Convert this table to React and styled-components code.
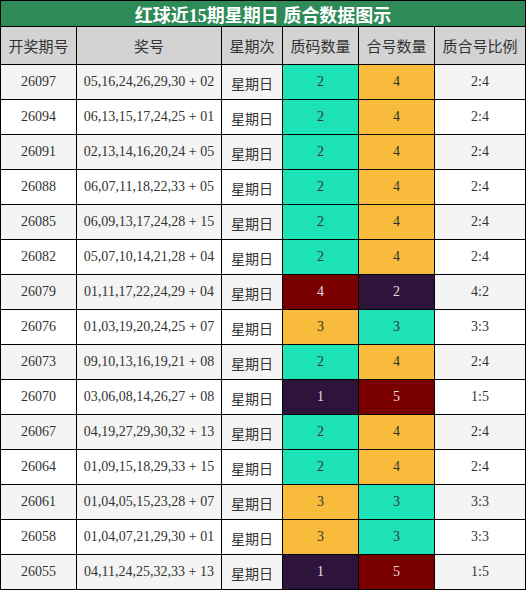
import React from 'react'
import styled, { createGlobalStyle } from 'styled-components'

const Global = createGlobalStyle`
  body {
    margin: 0;
    background: #fff;
    font-family: 'Liberation Serif', 'Noto Sans CJK SC', serif;
  }
`

const palette = {
  teal: { bg: '#1de2b5', fg: '#333' },
  orange: { bg: '#f9bb3b', fg: '#333' },
  red: { bg: '#7a0000', fg: '#ecdbe6' },
  purple: { bg: '#2e143a', fg: '#e6d9ea' },
}

const Board = styled.div`
  display: grid;
  grid-template-columns: 75px 144px 60px 75px 75px 90px;
  grid-template-rows: 25px 37px repeat(15, 34px);
  gap: 1px;
  padding: 1px;
  width: 526px;
  box-sizing: border-box;
  background: #000;
`

const Title = styled.div`
  grid-column: 1 / -1;
  display: flex;
  align-items: center;
  justify-content: center;
  background: #2e8b57;
  color: #fff;
  font-size: 18px;
  font-weight: bold;
`

const Head = styled.div`
  display: flex;
  align-items: center;
  justify-content: center;
  background: #d3d3d3;
  color: #333;
  font-size: 15px;
`

const Cell = styled.div`
  display: flex;
  align-items: center;
  justify-content: center;
  background: ${(p) => (p.$tone ? palette[p.$tone].bg : p.$odd ? '#f4f4f4' : '#fff')};
  color: ${(p) => (p.$tone ? palette[p.$tone].fg : '#333')};
  font-size: 14px;
  padding-top: ${(p) => (p.$cjk ? '2px' : '0')};
  white-space: nowrap;
`

// colour of a count cell depends on how many of six balls it holds
const primeTone = { 1: 'purple', 2: 'teal', 3: 'orange', 4: 'red' }
const compositeTone = { 2: 'purple', 3: 'teal', 4: 'orange', 5: 'red' }

const rows = [
  ['26097', '05,16,24,26,29,30 + 02', 2, 4],
  ['26094', '06,13,15,17,24,25 + 01', 2, 4],
  ['26091', '02,13,14,16,20,24 + 05', 2, 4],
  ['26088', '06,07,11,18,22,33 + 05', 2, 4],
  ['26085', '06,09,13,17,24,28 + 15', 2, 4],
  ['26082', '05,07,10,14,21,28 + 04', 2, 4],
  ['26079', '01,11,17,22,24,29 + 04', 4, 2],
  ['26076', '01,03,19,20,24,25 + 07', 3, 3],
  ['26073', '09,10,13,16,19,21 + 08', 2, 4],
  ['26070', '03,06,08,14,26,27 + 08', 1, 5],
  ['26067', '04,19,27,29,30,32 + 13', 2, 4],
  ['26064', '01,09,15,18,29,33 + 15', 2, 4],
  ['26061', '01,04,05,15,23,28 + 07', 3, 3],
  ['26058', '01,04,07,21,29,30 + 01', 3, 3],
  ['26055', '04,11,24,25,32,33 + 13', 1, 5],
]

const headers = ['开奖期号', '奖号', '星期次', '质码数量', '合号数量', '质合号比例']

export default function App() {
  return (
    <>
      <Global />
      <Board>
        <Title>红球近15期星期日 质合数据图示</Title>
        {headers.map((h) => (
          <Head key={h}>{h}</Head>
        ))}
        {rows.map(([issue, nums, prime, comp], i) => {
          const odd = i % 2 === 0
          return (
            <React.Fragment key={issue}>
              <Cell $odd={odd}>{issue}</Cell>
              <Cell $odd={odd}>{nums}</Cell>
              <Cell $odd={odd} $cjk>星期日</Cell>
              <Cell $tone={primeTone[prime]}>{prime}</Cell>
              <Cell $tone={compositeTone[comp]}>{comp}</Cell>
              <Cell $odd={odd}>{prime}:{comp}</Cell>
            </React.Fragment>
          )
        })}
      </Board>
    </>
  )
}
